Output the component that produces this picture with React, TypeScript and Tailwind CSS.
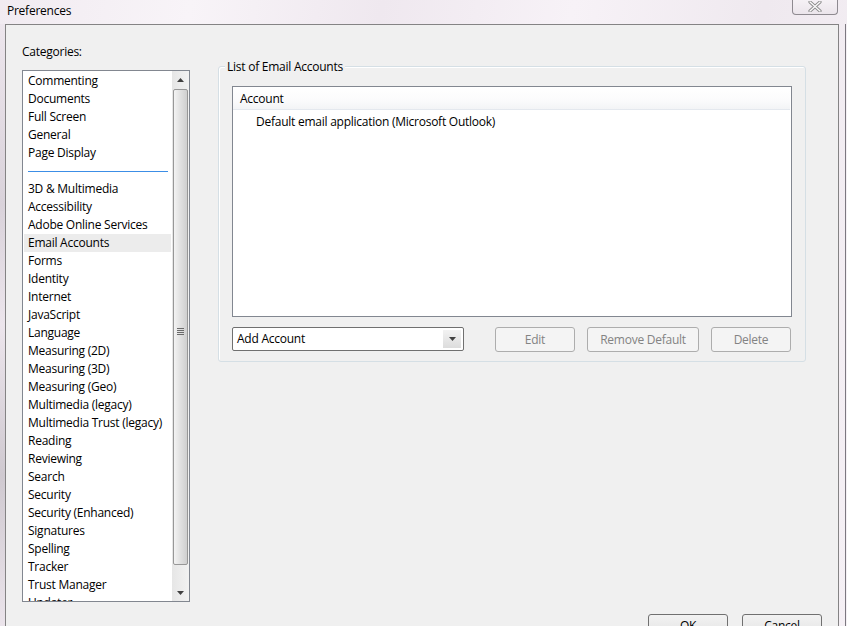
import React from "react";

const font = { fontFamily: '"Open Sans", "Noto Sans", "Liberation Sans", sans-serif' };

const items1 = ["Commenting", "Documents", "Full Screen", "General", "Page Display"];
const items2 = [
  "3D & Multimedia",
  "Accessibility",
  "Adobe Online Services",
  "Email Accounts",
  "Forms",
  "Identity",
  "Internet",
  "JavaScript",
  "Language",
  "Measuring (2D)",
  "Measuring (3D)",
  "Measuring (Geo)",
  "Multimedia (legacy)",
  "Multimedia Trust (legacy)",
  "Reading",
  "Reviewing",
  "Search",
  "Security",
  "Security (Enhanced)",
  "Signatures",
  "Spelling",
  "Tracker",
  "Trust Manager",
  "Updater",
];

function Item({ label }: { label: string }) {
  const sel = label === "Email Accounts";
  return (
    <div
      className={`shrink-0 h-[18px] leading-[18px] pl-[4px] mx-[1px] whitespace-nowrap text-[12px] tracking-[-0.25px] text-[#000] ${
        sel ? "bg-[#ececec]" : ""
      }`}
    >
      {label}
    </div>
  );
}

function Btn({ label, w }: { label: string; w: string }) {
  return (
    <div
      className={`${w} h-[25px] rounded-[3px] border border-[#adadad] bg-[#f4f4f4] flex items-center justify-center text-[12px] tracking-[-0.25px] text-[#838383]`}
    >
      {label}
    </div>
  );
}

function Arrow({ up }: { up?: boolean }) {
  return (
    <svg width="7" height="4" viewBox="0 0 7 4">
      {up ? <path d="M0 4 L3.5 0 L7 4 Z" fill="#404040" /> : <path d="M0 0 L7 0 L3.5 4 Z" fill="#404040" />}
    </svg>
  );
}

export default function App() {
  return (
    <div
      style={font}
      className="w-[847px] h-[626px] overflow-hidden flex flex-col bg-[linear-gradient(100deg,#f1ebf1_0%,#f8f4f8_20%,#efe8ef_40%,#f7f2f7_60%,#efe9ef_80%,#f5f0f5_100%)]"
    >
      {/* title bar */}
      <div className="h-[24px] flex items-start shrink-0">
        <div className="pl-[7px] pt-[3px] text-[12px] tracking-[-0.25px] leading-[16px] text-black">Preferences</div>
        <div className="flex-1" />
        <div className="mr-[9px] w-[46px] h-[16px] -mt-[1px] rounded-b-[4px] border border-t-0 border-[#8e8a90] bg-[linear-gradient(#f6f2f6,#ebe5eb)] flex items-center justify-center">
          <svg width="14" height="11" viewBox="0 0 14 11">
            <path d="M2 1 L12 10 M12 1 L2 10" stroke="#8a8a8a" strokeWidth="3.2" strokeLinecap="round" />
            <path d="M2 1 L12 10 M12 1 L2 10" stroke="#fafafa" strokeWidth="1.4" strokeLinecap="round" />
          </svg>
        </div>
      </div>

      <div className="flex flex-1 min-h-0">
        <div className="w-[5px] shrink-0 bg-[linear-gradient(#ede6ed,#d9d2da_30%,#ece5ec_50%,#cfc9d0_75%,#ebe4eb)]" />
        {/* client area */}
        <div className="w-[834px] shrink-0 border-l border-t border-r border-[#848384] bg-[#f0f0f0] flex flex-col">
          <div className="flex shrink-0">
            {/* left column */}
            <div className="ml-[16px] w-[168px] shrink-0 flex flex-col">
              <div className="mt-[19px] h-[16px] leading-[16px] text-[12px] tracking-[-0.25px] text-black">Categories:</div>
              <div className="mt-[10px] h-[532px] border border-[#828790] bg-white flex overflow-hidden">
                <div className="flex-1 min-w-0 flex flex-col pt-[1px]">
                  {items1.map((l) => (
                    <Item key={l} label={l} />
                  ))}
                  <div className="shrink-0 h-[18px] flex items-center pl-[5px] pr-[4px]">
                    <div className="h-px w-full bg-[#3c8ee6]" />
                  </div>
                  {items2.map((l) => (
                    <Item key={l} label={l} />
                  ))}
                </div>
                {/* scrollbar */}
                <div className="w-[17px] shrink-0 bg-[linear-gradient(90deg,#e6e6e6,#f2f2f2)] flex flex-col">
                  <div className="shrink-0 h-[18px] flex items-center justify-center">
                    <Arrow up />
                  </div>
                  <div className="shrink-0 mx-[1px] h-[476px] rounded-[2px] border border-[#979797] bg-[linear-gradient(90deg,#f3f3f3,#e2e2e2_45%,#cfcfcf)] flex items-center justify-center">
                    <div className="flex flex-col gap-[1px] mt-[8px]">
                      <div className="w-[7px] h-px bg-[#6a6a6a]" />
                      <div className="w-[7px] h-px bg-[#6a6a6a]" />
                      <div className="w-[7px] h-px bg-[#6a6a6a]" />
                      <div className="w-[7px] h-px bg-[#6a6a6a]" />
                    </div>
                  </div>
                  <div className="flex-1 flex items-end justify-center pb-[6px]">
                    <Arrow />
                  </div>
                </div>
              </div>
            </div>

            {/* right column */}
            <div className="ml-[28px] w-[588px] shrink-0">
              <div className="mt-[41px] relative h-[296px] rounded-[3px] border border-[#d5dfe5] shadow-[inset_1px_1px_0_#ffffff] px-[13px] pt-[19px]">
                <div className="absolute left-[6px] -top-[8px] px-[2px] bg-[#f0f0f0] text-[12px] tracking-[-0.25px] leading-[16px] text-black">
                  List of Email Accounts
                </div>
                <div className="w-[560px] h-[231px] border border-[#828790] bg-white flex flex-col">
                  <div className="h-[23px] mr-[1px] flex items-center pl-[7px] pt-[2px] text-[12px] tracking-[-0.25px] text-black bg-[linear-gradient(#ffffff,#fbfbfc_60%,#f3f4f6)] border-b border-[#e4e8ee]">
                    Account
                  </div>
                  <div className="h-[22px] flex items-center pl-[23px] text-[12px] tracking-[-0.25px] text-black mt-[1px]">
                    Default email application (Microsoft Outlook)
                  </div>
                </div>
                <div className="mt-[10px] flex items-start">
                  <div className="w-[232px] h-[24px] rounded-[2px] border border-[#707070] bg-white flex items-center p-[2px]">
                    <div className="flex-1 pl-[2px] text-[12px] tracking-[-0.25px] text-black">Add Account</div>
                    <div className="w-[18px] h-full bg-[linear-gradient(#f2f2f2,#dcdcdc)] flex items-center justify-center">
                      <Arrow />
                    </div>
                  </div>
                  <div className="ml-[31px] flex gap-[12px]">
                    <Btn label="Edit" w="w-[80px]" />
                    <Btn label="Remove Default" w="w-[112px]" />
                    <Btn label="Delete" w="w-[80px]" />
                  </div>
                </div>
              </div>
            </div>
          </div>

          {/* footer */}
          <div className="mt-[12px] flex justify-end pr-[16px] gap-[14px] shrink-0">
            <div className="w-[80px] h-[23px] rounded-[3px] border border-[#707070] bg-[linear-gradient(#f2f2f2,#ebebeb_50%,#dddddd)] flex items-center justify-center text-[12px] tracking-[-0.25px] text-black">
              OK
            </div>
            <div className="w-[80px] h-[23px] rounded-[3px] border border-[#707070] bg-[linear-gradient(#f2f2f2,#ebebeb_50%,#dddddd)] flex items-center justify-center text-[12px] tracking-[-0.25px] text-black">
              Cancel
            </div>
          </div>
        </div>
        <div className="w-[6px] shrink-0" />
        <div className="w-px shrink-0 bg-[#7c7880]" />
        <div className="w-px shrink-0 bg-[#f4f0f4]" />
      </div>
    </div>
  );
}
